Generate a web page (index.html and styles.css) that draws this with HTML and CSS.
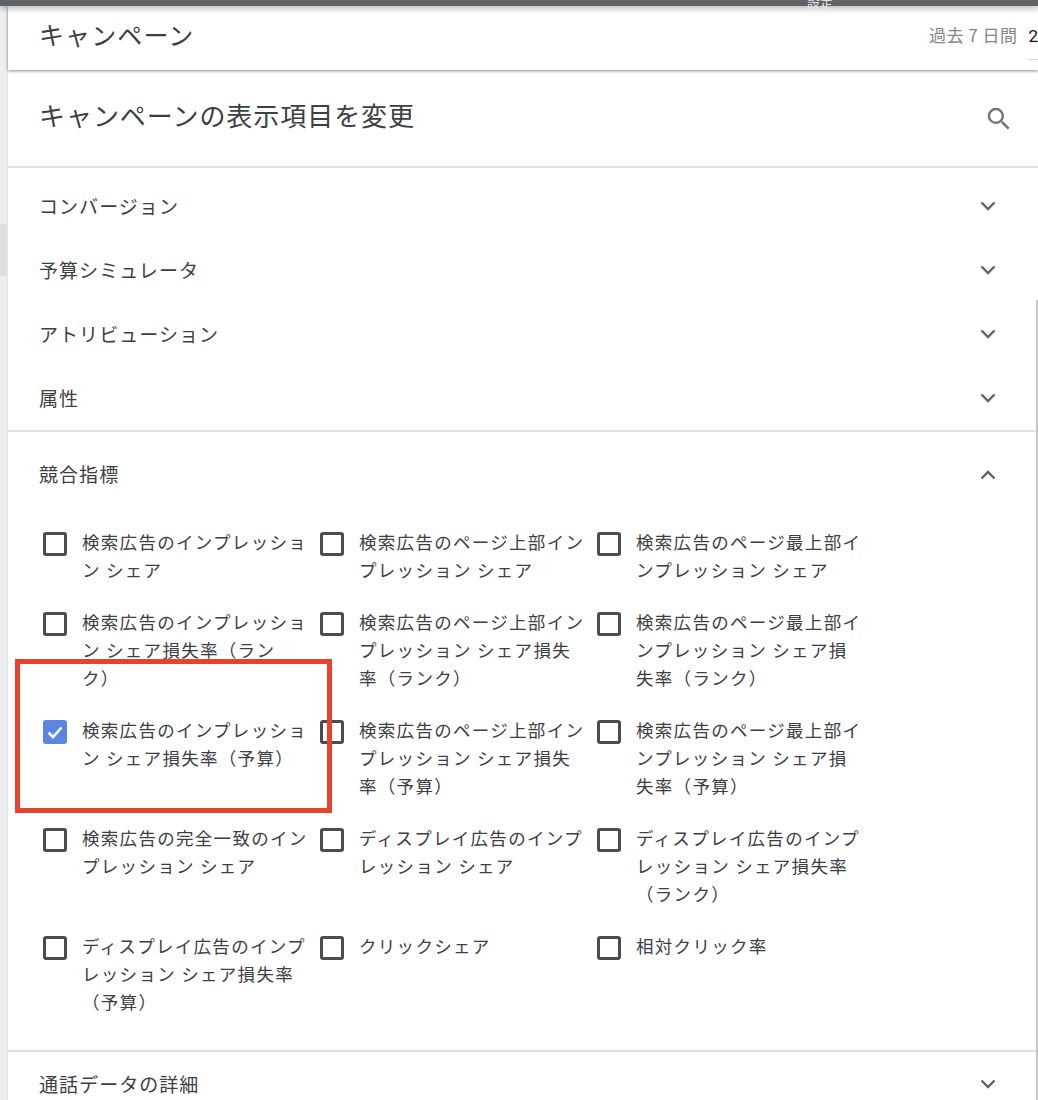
FILE: index.html
```html
<!DOCTYPE html>
<html lang="ja">
<head>
    <meta charset="UTF-8">
    <title>キャンペーンの表示項目を変更</title>
    <link rel="stylesheet" href="styles.css">
</head>
<body>
    <!-- Dark nav bar, only its bottom edge is visible -->
    <div class="top-bar"><span class="top-bar-label">設定</span></div>

    <div class="layout">
        <div class="gutter"><div class="gutter-mark"></div></div>

        <div class="main">
            <header class="page-header">
                <h1 class="page-title">キャンペーン</h1>
                <div class="date-range">
                    <span class="date-label">過去 7 日間</span>
                    <span class="date-value">2</span>
                </div>
            </header>

            <div class="panel">
                <div class="panel-head">
                    <h2 class="panel-title">キャンペーンの表示項目を変更</h2>
                    <svg class="search-icon" viewBox="0 0 24 24"><path d="M15.5 14h-.79l-.28-.27A6.47 6.47 0 0 0 16 9.5 6.5 6.5 0 1 0 9.5 16c1.61 0 3.09-.59 4.23-1.57l.27.28v.79l5 4.99L20.49 19l-4.99-5zm-6 0C7.01 14 5 11.99 5 9.5S7.01 5 9.5 5 14 7.01 14 9.5 11.99 14 9.5 14z"/></svg>
                </div>

                <div class="group-list">
                    <div class="group-row"><span>コンバージョン</span><svg class="chevron" viewBox="0 0 16 10"><path d="M1.5 1.5 8 8l6.5-6.5"/></svg></div>
                    <div class="group-row"><span>予算シミュレータ</span><svg class="chevron" viewBox="0 0 16 10"><path d="M1.5 1.5 8 8l6.5-6.5"/></svg></div>
                    <div class="group-row"><span>アトリビューション</span><svg class="chevron" viewBox="0 0 16 10"><path d="M1.5 1.5 8 8l6.5-6.5"/></svg></div>
                    <div class="group-row"><span>属性</span><svg class="chevron" viewBox="0 0 16 10"><path d="M1.5 1.5 8 8l6.5-6.5"/></svg></div>
                </div>

                <section class="group-open">
                    <div class="group-row open-head"><span>競合指標</span><svg class="chevron" viewBox="0 0 16 10"><path d="M1.5 8.5 8 2l6.5 6.5"/></svg></div>

                    <div class="option-grid">
                        <div class="option"><span class="box"></span><span class="option-text">検索広告のインプレッショ<br>ン シェア</span></div>
                        <div class="option"><span class="box"></span><span class="option-text">検索広告のページ上部イン<br>プレッション シェア</span></div>
                        <div class="option"><span class="box"></span><span class="option-text">検索広告のページ最上部イ<br>ンプレッション シェア</span></div>

                        <div class="option"><span class="box"></span><span class="option-text">検索広告のインプレッショ<br>ン シェア損失率（ラン<br>ク）</span></div>
                        <div class="option"><span class="box"></span><span class="option-text">検索広告のページ上部イン<br>プレッション シェア損失<br>率（ランク）</span></div>
                        <div class="option"><span class="box"></span><span class="option-text">検索広告のページ最上部イ<br>ンプレッション シェア損<br>失率（ランク）</span></div>

                        <div class="option"><span class="box checked"><svg viewBox="0 0 24 24"><path d="M5.5 12.5 10 17l8.5-9.5"/></svg></span><span class="option-text">検索広告のインプレッショ<br>ン シェア損失率（予算）</span></div>
                        <div class="option"><span class="box"></span><span class="option-text">検索広告のページ上部イン<br>プレッション シェア損失<br>率（予算）</span></div>
                        <div class="option"><span class="box"></span><span class="option-text">検索広告のページ最上部イ<br>ンプレッション シェア損<br>失率（予算）</span></div>

                        <div class="option"><span class="box"></span><span class="option-text">検索広告の完全一致のイン<br>プレッション シェア</span></div>
                        <div class="option"><span class="box"></span><span class="option-text">ディスプレイ広告のインプ<br>レッション シェア</span></div>
                        <div class="option"><span class="box"></span><span class="option-text">ディスプレイ広告のインプ<br>レッション シェア損失率<br>（ランク）</span></div>

                        <div class="option"><span class="box"></span><span class="option-text">ディスプレイ広告のインプ<br>レッション シェア損失率<br>（予算）</span></div>
                        <div class="option"><span class="box"></span><span class="option-text">クリックシェア</span></div>
                        <div class="option"><span class="box"></span><span class="option-text">相対クリック率</span></div>
                    </div>
                </section>

                <div class="group-row last-row"><span>通話データの詳細</span><svg class="chevron" viewBox="0 0 16 10"><path d="M1.5 1.5 8 8l6.5-6.5"/></svg></div>
            </div>
        </div>
    </div>

    <!-- Annotation and scrollbar sit over the page -->
    <div class="highlight"></div>
    <div class="scroll-thumb"></div>
</body>
</html>
```

FILE: styles.css
```css
html, body {
    margin: 0;
    height: 1100px;
    overflow: hidden;
    background-color: #fff;
    color: #3c4043;
    font-family: "Noto Sans CJK JP", "Noto Sans", sans-serif;
}

/* Top nav */
.top-bar {
    height: 6px;
    background-color: #5f6368;
    position: relative;
    z-index: 3;
    box-shadow: 0 2px 6px rgba(60, 64, 67, 0.45);
}

.top-bar-label {
    display: block;
    margin-left: 807px;
    font-size: 13px;
    line-height: 16px;
    height: 16px;
    position: relative;
    top: -6px;
    color: #e4e6e9;
}

.layout {
    display: flex;
}

/* Left gutter */
.gutter {
    width: 8px;
    height: 1094px;
    padding-top: 218px;
    box-sizing: border-box;
    background-color: #eceef2;
    border-right: 1px solid #e3e5e8;
    flex: none;
}

.gutter-mark {
    height: 52px;
    background-color: #dcdee2;
}

.main {
    flex: 1;
    min-width: 0;
}

/* Page header */
.page-header {
    height: 64px;
    box-sizing: border-box;
    padding-left: 31px;
    display: flex;
    align-items: center;
    justify-content: space-between;
    position: relative;
    z-index: 2;
    background-color: #fff;
    box-shadow: 0 1px 3px rgba(60, 64, 67, 0.6);
}

.page-title {
    margin: 0 0 8px;
    font-size: 25px;
    font-weight: 400;
    letter-spacing: 1.1px;
    line-height: 52px;
}

.date-range {
    display: flex;
    align-items: center;
    gap: 11px;
    width: 109px;
    flex: none;
    align-self: stretch;
}

.date-label {
    font-size: 17px;
    letter-spacing: 0.5px;
    line-height: 60px;
    margin-bottom: 6px;
    color: #80868b;
    white-space: nowrap;
}

.date-value {
    font-size: 17px;
    font-family: "Roboto", sans-serif;
    color: #111;
    height: 53px;
    line-height: 60px;
    flex: 1;
    margin-bottom: 11px;
    border-bottom: 1px solid #dadce0;
}

/* Panel */
.panel-head {
    height: 98px;
    box-sizing: border-box;
    padding: 0 24px 0 31px;
    display: flex;
    align-items: center;
    justify-content: space-between;
    border-bottom: 2px solid #e0e0e0;
}

.panel-title {
    margin: 0 0 8px;
    font-size: 26px;
    font-weight: 400;
    letter-spacing: 0.95px;
}

.search-icon {
    width: 30px;
    height: 30px;
    fill: #757575;
    margin-top: 2px;
}

.group-list {
    padding-top: 6px;
    border-bottom: 2px solid #e0e0e0;
}

.group-row {
    height: 64px;
    padding: 0 42px 0 31px;
    display: flex;
    align-items: center;
    justify-content: space-between;
    font-size: 19px;
    letter-spacing: 1.05px;
}

.group-row span {
    margin-bottom: 2px;
}

.chevron {
    width: 16px;
    height: 10px;
    fill: none;
    stroke: #5f6368;
    stroke-width: 2.4px;
}

/* Open group */
.group-open {
    border-bottom: 2px solid #e0e0e0;
    padding-bottom: 33px;
}

.open-head {
    height: 86px;
}

.open-head span {
    margin-bottom: 4px;
}

.option-grid {
    display: grid;
    grid-template-columns: repeat(3, 277px);
    row-gap: 24px;
    padding-left: 35px;
    padding-top: 11px;
}

.option {
    display: flex;
    align-items: flex-start;
    gap: 15px;
    font-size: 17.5px;
    letter-spacing: 1.3px;
    line-height: 28px;
}

.option-text {
    white-space: nowrap;
    margin: -1px 0 1px;
}

.box {
    width: 24px;
    height: 24px;
    margin-top: 3px;
    box-sizing: border-box;
    border: 3px solid #4a4d50;
    border-radius: 3px;
    flex: none;
    position: relative;
    z-index: 1;
}

.box.checked {
    background-color: #5c85e2;
    border: none;
}

.box.checked svg {
    display: block;
    fill: none;
    stroke: #fff;
    stroke-width: 2.6px;
}

.last-row {
    height: 64px;
}

/* Red annotation box */
.highlight {
    position: absolute;
    left: 15px;
    top: 659px;
    width: 317px;
    height: 154px;
    box-sizing: border-box;
    border: 5px solid #e8432a;
    z-index: 5;
}

.scroll-thumb {
    position: absolute;
    right: 0;
    top: 300px;
    width: 2px;
    height: 800px;
    background-color: #c4c6c9;
}
```
